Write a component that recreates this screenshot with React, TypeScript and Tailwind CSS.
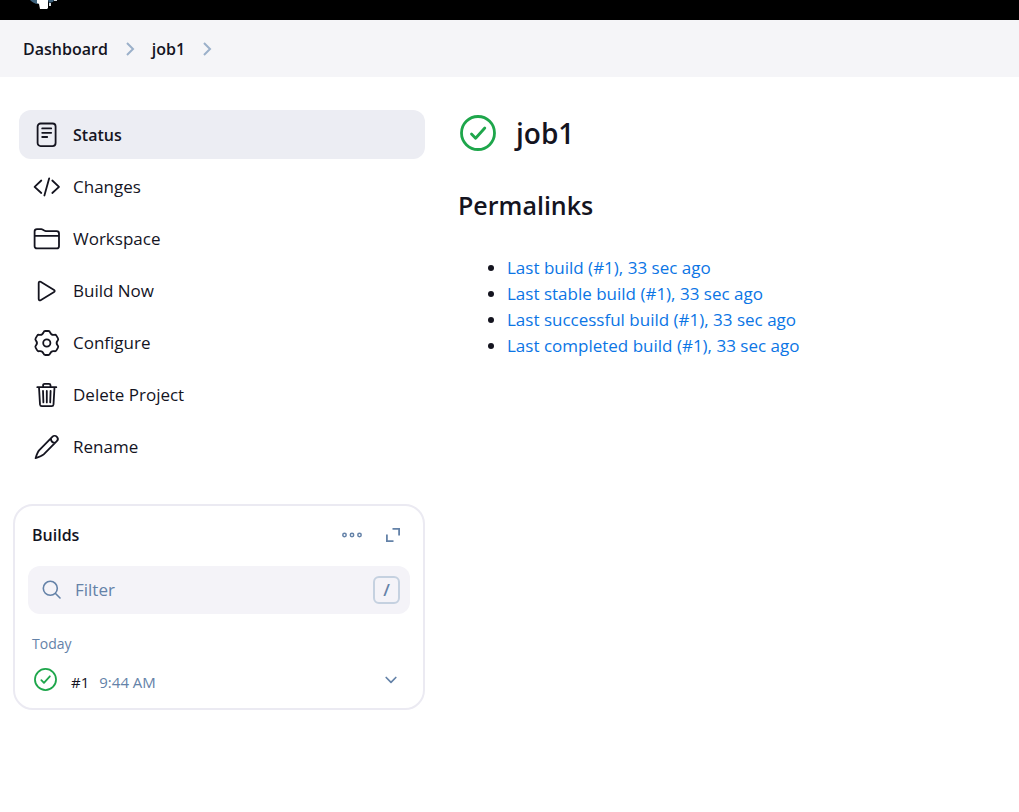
import React from "react";

type IconProps = { children: React.ReactNode };

function TaskIcon({ children }: IconProps) {
  return (
    <svg
      className="size-7 shrink-0"
      viewBox="0 0 28 28"
      fill="none"
      stroke="currentColor"
      strokeWidth="1.8"
      strokeLinecap="round"
      strokeLinejoin="round"
      aria-hidden="true"
    >
      {children}
    </svg>
  );
}

function SuccessIcon({ className }: { className: string }) {
  return (
    <svg
      className={className}
      viewBox="0 0 36 36"
      fill="none"
      stroke="#1ea64b"
      strokeWidth="2.8"
      strokeLinecap="round"
      strokeLinejoin="round"
      role="img"
      aria-label="Success"
    >
      <circle cx="18" cy="18" r="16.5" />
      <path d="M11.5 19l4.1 4.2L24.8 13" />
    </svg>
  );
}

function CrumbArrow() {
  return (
    <svg
      className="h-4 w-2.5"
      viewBox="0 0 10 16"
      fill="none"
      stroke="#9bb0ca"
      strokeWidth="2"
      aria-hidden="true"
    >
      <path d="M2 2l6 6-6 6" />
    </svg>
  );
}

const tasks = [
  {
    label: "Status",
    icon: (
      <TaskIcon>
        <rect x="4.6" y="2.5" width="18" height="22.6" rx="3" />
        <path d="M9.2 7.4h9M9.2 11.8h9M9.2 16h5" />
      </TaskIcon>
    ),
  },
  {
    label: "Changes",
    icon: (
      <TaskIcon>
        <path d="M8.3 7.5L1.6 13.8l6.7 6.2M19.3 7.5l6.7 6.3-6.7 6.2M16.2 5.3l-4.8 17.2" />
      </TaskIcon>
    ),
  },
  {
    label: "Workspace",
    icon: (
      <TaskIcon>
        <path d="M1.6 10.8V6.6a2.4 2.4 0 0 1 2.4-2.4h4.3c.6 0 1.1.2 1.6.5l1.4.9c.5.3 1 .5 1.6.5H23.6a2.4 2.4 0 0 1 2.4 2.4v12.7a2.2 2.2 0 0 1-2.2 2.2H3.8a2.2 2.2 0 0 1-2.2-2.2zM1.6 10.8h24.4" />
      </TaskIcon>
    ),
  },
  {
    label: "Build Now",
    icon: (
      <TaskIcon>
        <path d="M5.7 6v16c0 1.1 1 1.7 1.9 1.2l13.5-8.1c.8-.5.8-1.7 0-2.2L7.6 4.8C6.7 4.3 5.7 4.9 5.7 6z" />
      </TaskIcon>
    ),
  },
  {
    label: "Configure",
    icon: (
      <TaskIcon>
        <g transform="translate(13.8 14)">
          <path d="M-1.6-12H1.6Q2.9-12 3.3-10.6C3.9-8.9 5.76-7.83 7.53-8.16Q8.94-8.51 9.59-7.39L11.19-4.61Q11.84-3.49 10.83-2.44C9.66-1.07 9.66 1.07 10.83 2.44Q11.84 3.49 11.19 4.61L9.59 7.39Q8.94 8.51 7.53 8.16C5.76 7.83 3.9 8.9 3.3 10.6Q2.9 12 1.6 12H-1.6Q-2.9 12-3.3 10.6C-3.9 8.9-5.76 7.83-7.53 8.16Q-8.94 8.51-9.59 7.39L-11.19 4.61Q-11.84 3.49-10.83 2.44C-9.66 1.07-9.66-1.07-10.83-2.44Q-11.84-3.49-11.19-4.61L-9.59-7.39Q-8.94-8.51-7.53-8.16C-5.76-7.83-3.9-8.9-3.3-10.6Q-2.9-12-1.6-12z" />
          <circle r="3.6" />
        </g>
      </TaskIcon>
    ),
  },
  {
    label: "Delete Project",
    icon: (
      <TaskIcon>
        <path d="M6 6.2l1 17.2c.1 1 .8 1.7 1.8 1.7h9.9c1 0 1.7-.7 1.8-1.7l1-17.2M4.3 6.2h19M10.1 6V4.3c0-.9.6-1.5 1.5-1.5h4.4c.9 0 1.5.6 1.5 1.5V6M13.8 9.9v11.5M10 9.9l.4 11.5M17.6 9.9l-.4 11.5" />
      </TaskIcon>
    ),
  },
  {
    label: "Rename",
    icon: (
      <TaskIcon>
        <path d="M19.3 3.8L6.3 17.2c-1.1 1.2-2.8 5-3.7 8 3-.9 6.9-2.7 8.1-3.8L23.8 8.2c1.3-1.3 1.3-3.2.1-4.4s-3.3-1.3-4.6 0zM17.9 5.6c.1 2.4 1.7 4.1 4.3 4.3" />
      </TaskIcon>
    ),
  },
];

const permalinks = [
  "Last build (#1), 33 sec ago",
  "Last stable build (#1), 33 sec ago",
  "Last successful build (#1), 33 sec ago",
  "Last completed build (#1), 33 sec ago",
];

function PageHeader() {
  return (
    <header className="flex h-5 items-start bg-black pl-7">
      <svg className="h-3 w-8" viewBox="0 0 32 12" aria-hidden="true">
        <path d="M2 0h8v4C7 4 4 2 2 0z" fill="#3e627c" />
        <path d="M20 0h6l-1 2-4 1z" fill="#3e627c" />
        <path d="M9 0h11v8l-1 1h-7l-1-5-2-1z" fill="#fff" />
        <path d="M21 3h2v3h-2zM26 0h3v1h-3z" fill="#d5dbe0" />
      </svg>
    </header>
  );
}

function Tasks() {
  return (
    <nav aria-label="Tasks" className="pl-1.5">
      <ul className="flex flex-col gap-[3px]">
        {tasks.map((task, index) => (
          <li key={task.label}>
            <a
              href="#"
              aria-current={index === 0 ? "page" : undefined}
              className={`flex h-[49px] items-center gap-3 rounded-xl px-3.5 ${
                index === 0
                  ? "bg-[#ecedf3] text-base font-semibold"
                  : "text-[17px]"
              }`}
            >
              {task.icon}
              {task.label}
            </a>
          </li>
        ))}
      </ul>
    </nav>
  );
}

function BuildsCard() {
  return (
    <section className="mt-[33px] rounded-[20px] border-2 border-[#ebeaf2] px-[13px] pb-2.5 text-[#6482a8]">
      <div className="flex h-15 items-center pr-[9px] pb-0.5 pl-1">
        <h2 className="flex-1 text-base font-semibold text-[#14141f]">
          Builds
        </h2>
        <div className="flex items-center gap-[21px]">
          <button type="button" aria-label="More actions" className="p-0.5">
            <svg
              className="h-4 w-5"
              viewBox="0 0 20 16"
              fill="none"
              stroke="currentColor"
              strokeWidth="1.5"
            >
              <circle cx="2.5" cy="8" r="1.7" />
              <circle cx="10" cy="8" r="1.7" />
              <circle cx="17.5" cy="8" r="1.7" />
            </svg>
          </button>
          <button type="button" aria-label="Expand">
            <svg
              className="size-4"
              viewBox="0 0 16 16"
              fill="none"
              stroke="currentColor"
              strokeWidth="1.8"
            >
              <path d="M7.5 1.9h6.6v6.6M1.9 7.5v6.6h6.6" />
            </svg>
          </button>
        </div>
      </div>

      <div className="flex h-12 items-center gap-[13px] rounded-xl bg-[#f4f3f8] pr-2.5 pl-3.5">
        <svg
          className="size-5"
          viewBox="0 0 20 20"
          fill="none"
          stroke="currentColor"
          strokeWidth="1.6"
          strokeLinecap="round"
          aria-hidden="true"
        >
          <circle cx="8.3" cy="8.3" r="7" />
          <path d="M13.5 13.5l4.5 4.5" />
        </svg>
        <input
          type="text"
          placeholder="Filter"
          aria-label="Filter builds"
          className="min-w-0 flex-1 bg-transparent text-[17px] outline-none placeholder:text-[#6482a8]"
        />
        <kbd className="flex h-7 w-[27px] items-center justify-center rounded-md border-2 border-[#c5d1e0] font-['Open_Sans',sans-serif] text-[17px] font-semibold">
          /
        </kbd>
      </div>

      <h3 className="mt-5 pl-1 text-sm leading-5">Today</h3>
      <div className="mt-2 flex h-9 items-center pr-3 pl-1.5">
        <SuccessIcon className="mb-0.5 size-[23px]" />
        <a href="#" className="ml-3.5 pt-1 text-[15px] text-[#14141f]">
          #1
        </a>
        <a href="#" className="ml-2.5 flex-1 pt-1 text-[15px]">
          9:44 AM
        </a>
        <button type="button" aria-label="Build #1 actions">
          <svg
            className="size-3.5"
            viewBox="0 0 14 14"
            fill="none"
            stroke="currentColor"
            strokeWidth="1.7"
            strokeLinecap="round"
            strokeLinejoin="round"
          >
            <path d="M2.2 4.5L7 9.3l4.8-4.8" />
          </svg>
        </button>
      </div>
    </section>
  );
}

export default function App() {
  return (
    <div className="min-h-screen bg-white font-['Open_Sans','Noto_Sans',sans-serif] text-[#14141f]">
      <PageHeader />
      <nav
        aria-label="Breadcrumb"
        className="flex h-[57px] items-center gap-[17px] bg-[#f5f5f8] px-[23px] text-base font-semibold"
      >
        <a href="#">Dashboard</a>
        <CrumbArrow />
        <a href="#">job1</a>
        <CrumbArrow />
      </nav>

      <div className="grid grid-cols-[minmax(0,412px)_minmax(0,1fr)] gap-[33px] py-[33px] pr-6 pl-[13px]">
        <aside>
          <Tasks />
          <BuildsCard />
        </aside>

        <main>
          <div className="flex h-[46px] items-center gap-5 pl-0.5">
            <SuccessIcon className="size-9" />
            <h1 className="text-[28px] font-semibold">job1</h1>
          </div>
          <h2 className="mt-7 text-[25px] leading-[42px] font-semibold">
            Permalinks
          </h2>
          <ul className="mt-7 list-disc pt-px pl-[49px] text-[17px] leading-[26px]">
            {permalinks.map((link) => (
              <li key={link}>
                <a href="#" className="text-[#0b75e5]">
                  {link}
                </a>
              </li>
            ))}
          </ul>
        </main>
      </div>
    </div>
  );
}
